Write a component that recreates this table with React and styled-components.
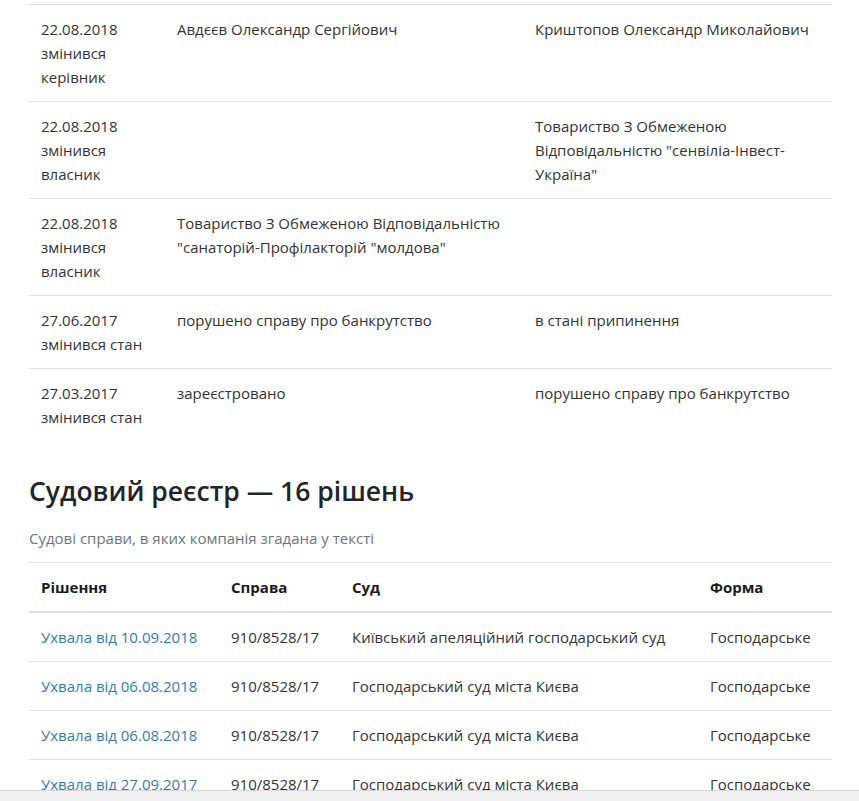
import React from "react";
import styled, { createGlobalStyle } from "styled-components";

const Global = createGlobalStyle`
  html, body { margin: 0; padding: 0; background: #fff; }
  body { font-family: "Open Sans", "Noto Sans", sans-serif; color: #333; }
`;

const Page = styled.div`
  width: 803px;
  padding: 4px 0 40px 29px;
`;

const Table = styled.table`
  width: 100%;
  border-collapse: collapse;
  font-size: 15px;
  line-height: 24px;
`;

const Row = styled.tr`
  border-top: ${(p) => (p.$first ? "none" : "1px solid #dee2e6")};
`;

const Cell = styled.td`
  padding: 12px;
  vertical-align: top;
  width: ${(p) => p.$w || "auto"};
`;

const HeadCell = styled.th`
  padding: 12px;
  text-align: left;
  font-weight: 700;
  color: #1a1a1a;
  border-top: 1px solid #dee2e6;
  border-bottom: 2px solid #dee2e6;
  width: ${(p) => p.$w || "auto"};
`;

const Heading = styled.h2`
  margin: 35px 0 0;
  font-size: 26.5px;
  line-height: 31px;
  font-weight: 600;
  color: #212529;
`;

const Sub = styled.p`
  margin: 21px 0 13px;
  font-size: 15px;
  line-height: 21px;
  color: #6c757d;
`;

const Link = styled.a`
  color: #337ab7;
  text-decoration: none;
`;

const BottomBar = styled.div`
  position: fixed;
  left: 0;
  right: 0;
  bottom: 0;
  height: 10px;
  background: #f0f0f0;
  border-top: 1px solid #d6d6d6;
`;

const changes = [
  ["22.08.2018", "змінився керівник", "Авдєєв Олександр Сергійович", "Криштопов Олександр Миколайович"],
  ["22.08.2018", "змінився власник", "", 'Товариство З Обмеженою Відповідальністю "сенвіліа-Інвест-Україна"'],
  ["22.08.2018", "змінився власник", 'Товариство З Обмеженою Відповідальністю "санаторій-Профілакторій "молдова"', ""],
  ["27.06.2017", "змінився стан", "порушено справу про банкрутство", "в стані припинення"],
  ["27.03.2017", "змінився стан", "зареєстровано", "порушено справу про банкрутство"],
];

const decisions = [
  ["Ухвала від 10.09.2018", "910/8528/17", "Київський апеляційний господарський суд", "Господарське"],
  ["Ухвала від 06.08.2018", "910/8528/17", "Господарський суд міста Києва", "Господарське"],
  ["Ухвала від 06.08.2018", "910/8528/17", "Господарський суд міста Києва", "Господарське"],
  ["Ухвала від 27.09.2017", "910/8528/17", "Господарський суд міста Києва", "Господарське"],
];

export default function App() {
  return (
    <Page>
      <Global />
      <Table>
        <tbody>
          {changes.map((r, i) => (
            <Row key={i}>
              <Cell $w="112px">
                {r[0]}
                <br />
                {r[1]}
              </Cell>
              <Cell $w="334px">{r[2]}</Cell>
              <Cell>{r[3]}</Cell>
            </Row>
          ))}
        </tbody>
      </Table>
      <Heading>Судовий реєстр — 16 рішень</Heading>
      <Sub>Судові справи, в яких компанія згадана у тексті</Sub>
      <Table>
        <thead>
          <tr>
            <HeadCell $w="166px">Рішення</HeadCell>
            <HeadCell $w="97px">Справа</HeadCell>
            <HeadCell $w="334px">Суд</HeadCell>
            <HeadCell>Форма</HeadCell>
          </tr>
        </thead>
        <tbody>
          {decisions.map((r, i) => (
            <Row key={i} $first={i === 0}>
              <Cell>
                <Link href="#">{r[0]}</Link>
              </Cell>
              <Cell>{r[1]}</Cell>
              <Cell>{r[2]}</Cell>
              <Cell>{r[3]}</Cell>
            </Row>
          ))}
        </tbody>
      </Table>
      <BottomBar />
    </Page>
  );
}
